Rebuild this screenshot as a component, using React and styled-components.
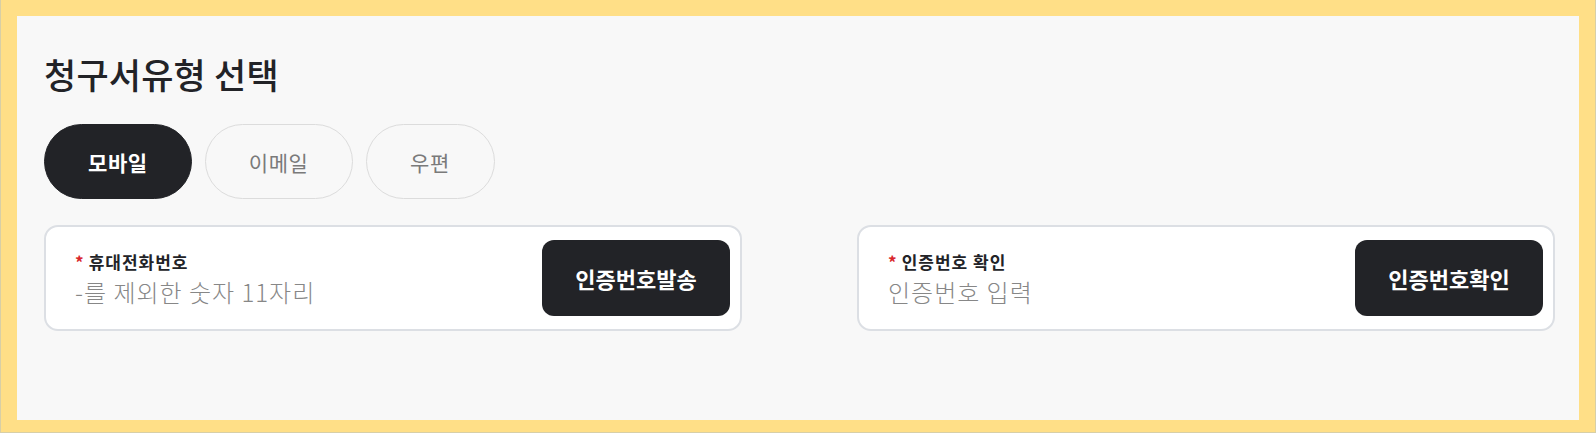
import React, { useState } from "react";
import styled, { createGlobalStyle } from "styled-components";

const GlobalStyle = createGlobalStyle`
  * { box-sizing: border-box; }
  body {
    margin: 0;
    background: #ffdf87;
    font-family: "Noto Sans CJK KR", "Noto Sans", sans-serif;
  }
`;

const TYPES = ["모바일", "이메일", "우편"];

const App = () => {
  const [type, setType] = useState("모바일");

  return (
    <Frame>
      <GlobalStyle />
      <Panel>
        <Title>청구서유형 선택</Title>
        <Tabs>
          {TYPES.map((t) => (
            <Tab key={t} active={t === type} onClick={() => setType(t)}>
              {t}
            </Tab>
          ))}
        </Tabs>
        <Cards>
          <Card>
            <Field>
              <Label>
                <Star>*</Star>휴대전화번호
              </Label>
              <Input placeholder="-를 제외한 숫자 11자리" />
            </Field>
            <Button>인증번호발송</Button>
          </Card>
          <Card>
            <Field>
              <Label>
                <Star>*</Star>인증번호 확인
              </Label>
              <Input placeholder="인증번호 입력" />
            </Field>
            <Button>인증번호확인</Button>
          </Card>
        </Cards>
      </Panel>
    </Frame>
  );
};
export default App;

const Frame = styled.div`
  height: 433px;
  background: #ffdf87;
  border: 1px solid #d8cfa6;
  border-top: none;
  padding: 16px 16px 12px 16px;
  display: flex;
`;
const Panel = styled.div`
  flex: 1;
  background: #f8f8f8;
  padding: 0 24px 0 27px;
  display: flex;
  flex-direction: column;
`;
const Title = styled.h2`
  margin: 35px 0 0;
  font-size: 35px;
  line-height: 46px;
  font-weight: 500;
  color: #222327;
  letter-spacing: 0.2px;
`;
const Tabs = styled.div`
  display: flex;
  gap: 13px;
  margin-top: 27px;
`;
const Tab = styled.button`
  height: 75px;
  min-width: 129px;
  padding: 0 43px;
  border-radius: 38px;
  font-family: inherit;
  font-size: 21px;
  letter-spacing: 0.6px;
  font-weight: ${(props) => (props.active ? 700 : 400)};
  color: ${(props) => (props.active ? "#ffffff" : "#7a7a7a")};
  background: ${(props) => (props.active ? "#222327" : "#f8f8f8")};
  border: 1px solid ${(props) => (props.active ? "#222327" : "#dcdcdc")};
  cursor: pointer;
`;
const Cards = styled.div`
  display: grid;
  grid-template-columns: 698px 698px;
  justify-content: space-between;
  margin-top: 26px;
`;
const Card = styled.div`
  height: 106px;
  background: #ffffff;
  border: 2px solid #dcdfe4;
  border-radius: 14px;
  padding: 0 10px 0 29px;
  display: flex;
  align-items: center;
  justify-content: space-between;
`;
const Field = styled.div`
  display: flex;
  flex-direction: column;
  gap: 3px;
  margin-top: 2px;
`;
const Label = styled.label`
  font-size: 17px;
  font-weight: 700;
  line-height: 22px;
  letter-spacing: 1px;
  color: #222327;
`;
const Star = styled.span`
  color: #d9262c;
  margin-right: 5px;
  letter-spacing: 0;
`;
const Input = styled.input`
  width: 400px;
  border: none;
  outline: none;
  padding: 0;
  background: transparent;
  font-family: inherit;
  font-size: 24px;
  line-height: 32px;
  letter-spacing: 1px;
  color: #222327;
  &::placeholder {
    color: #878787;
    font-weight: 300;
  }
`;
const Button = styled.button`
  width: 188px;
  height: 76px;
  border: none;
  border-radius: 12px;
  background: #222327;
  color: #ffffff;
  font-family: inherit;
  font-size: 22px;
  font-weight: 700;
  cursor: pointer;
`;
